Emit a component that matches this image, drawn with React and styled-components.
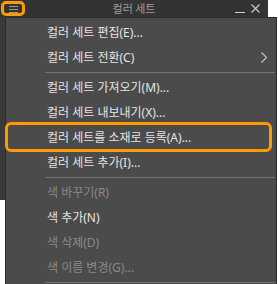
import React from "react";
import styled, { createGlobalStyle } from "styled-components";

const Global = createGlobalStyle`
  html, body { margin: 0; padding: 0; background: #ffffff; }
  body { font-family: "Noto Sans", "Noto Sans CJK KR", sans-serif; }
`;

const Page = styled.div`
  position: relative;
  width: 278px;
  height: 284px;
  overflow: hidden;
`;

const Window = styled.div`
  width: 268px;
  height: 200px;
  background: #3a3a3a;
  display: flex;
  flex-direction: column;
`;

const TitleBar = styled.div`
  height: 17px;
  background: #333333;
  display: grid;
  grid-template-columns: 30px 1fr 30px;
  align-items: center;
  position: relative;
`;

const MenuButton = styled.div`
  position: relative;
  width: 30px;
  height: 17px;
  &::after {
    content: "";
    position: absolute;
    left: 1px;
    top: 1px;
    width: 24px;
    height: 15px;
    box-sizing: border-box;
    border: 3px solid #ff9a00;
    border-radius: 5px;
  }
`;

const Title = styled.div`
  text-align: center;
  font-family: "Noto Sans CJK KR", sans-serif;
  font-size: 11px;
  line-height: 17px;
  color: #9e9e9e;
`;

const Controls = styled.div`
  position: absolute;
  right: 8px;
  top: 0;
  height: 17px;
  display: flex;
  align-items: center;
  gap: 6px;
`;

const Menu = styled.div`
  position: absolute;
  left: 5px;
  top: 17px;
  width: 272px;
  height: 280px;
  box-sizing: border-box;
  background: #4b4b4b;
  border: 1px solid #2c2c2c;
  padding-top: 2px;
  display: flex;
  flex-direction: column;
`;

const Row = styled.div`
  position: relative;
  height: 25px;
  display: flex;
  align-items: center;
  padding-left: 41px;
  padding-right: 9px;
  font-size: 12px;
  color: ${(p) => (p.$disabled ? "#8a8a8a" : "#e4e4e4")};
  white-space: nowrap;
  ${(p) =>
    p.$marked &&
    `
    &::after {
      content: "";
      position: absolute;
      left: -1px;
      right: 4px;
      top: -3px;
      bottom: -2px;
      border: 3px solid #ff9a00;
      border-radius: 6px;
      pointer-events: none;
    }
  `}
`;

const Label = styled.span`
  flex: 1;
  line-height: 25px;
`;

const Separator = styled.div`
  height: 1px;
  margin: 2px 1px 2px 39px;
  background: #727272;
`;

const Hamburger = () => (
  <svg width="30" height="17" viewBox="0 0 30 17" style={{ display: "block" }}>
    <g stroke="#9a9a9a" strokeWidth="1">
      <line x1="9" y1="6.5" x2="18" y2="6.5" />
      <line x1="9" y1="9.5" x2="18" y2="9.5" />
      <line x1="9" y1="12.5" x2="18" y2="12.5" />
    </g>
  </svg>
);

const Chevron = () => (
  <svg width="6" height="11" viewBox="0 0 6 11">
    <polyline points="0.5,0.5 5.5,5.5 0.5,10.5" fill="none" stroke="#c8c8c8" strokeWidth="1.1" />
  </svg>
);

const Minimize = () => (
  <svg width="10" height="10" viewBox="0 0 10 10">
    <line x1="0" y1="8.5" x2="10" y2="8.5" stroke="#cfcfcf" strokeWidth="1" />
  </svg>
);

const Close = () => (
  <svg width="9" height="9" viewBox="0 0 9 9">
    <g stroke="#cfcfcf" strokeWidth="1.1">
      <line x1="0.5" y1="0.5" x2="8.5" y2="8.5" />
      <line x1="8.5" y1="0.5" x2="0.5" y2="8.5" />
    </g>
  </svg>
);

const groups = [
  [
    { label: "컬러 세트 편집(E)..." },
    { label: "컬러 세트 전환(C)", sub: true },
  ],
  [
    { label: "컬러 세트 가져오기(M)..." },
    { label: "컬러 세트 내보내기(X)..." },
    { label: "컬러 세트를 소재로 등록(A)...", marked: true },
    { label: "컬러 세트 추가(I)..." },
  ],
  [
    { label: "색 바꾸기(R)", disabled: true },
    { label: "색 추가(N)" },
    { label: "색 삭제(D)", disabled: true },
    { label: "색 이름 변경(G)...", disabled: true },
  ],
];

export default function App() {
  return (
    <>
      <Global />
      <Page>
        <Window>
          <TitleBar>
            <MenuButton>
              <Hamburger />
            </MenuButton>
            <Title>컬러 세트</Title>
            <span />
            <Controls>
              <Minimize />
              <Close />
            </Controls>
          </TitleBar>
        </Window>
        <Menu>
          {groups.map((g, gi) => (
            <React.Fragment key={gi}>
              {g.map((it) => (
                <Row key={it.label} $disabled={it.disabled} $marked={it.marked}>
                  <Label>{it.label}</Label>
                  {it.sub && <Chevron />}
                </Row>
              ))}
              <Separator />
            </React.Fragment>
          ))}
        </Menu>
      </Page>
    </>
  );
}
